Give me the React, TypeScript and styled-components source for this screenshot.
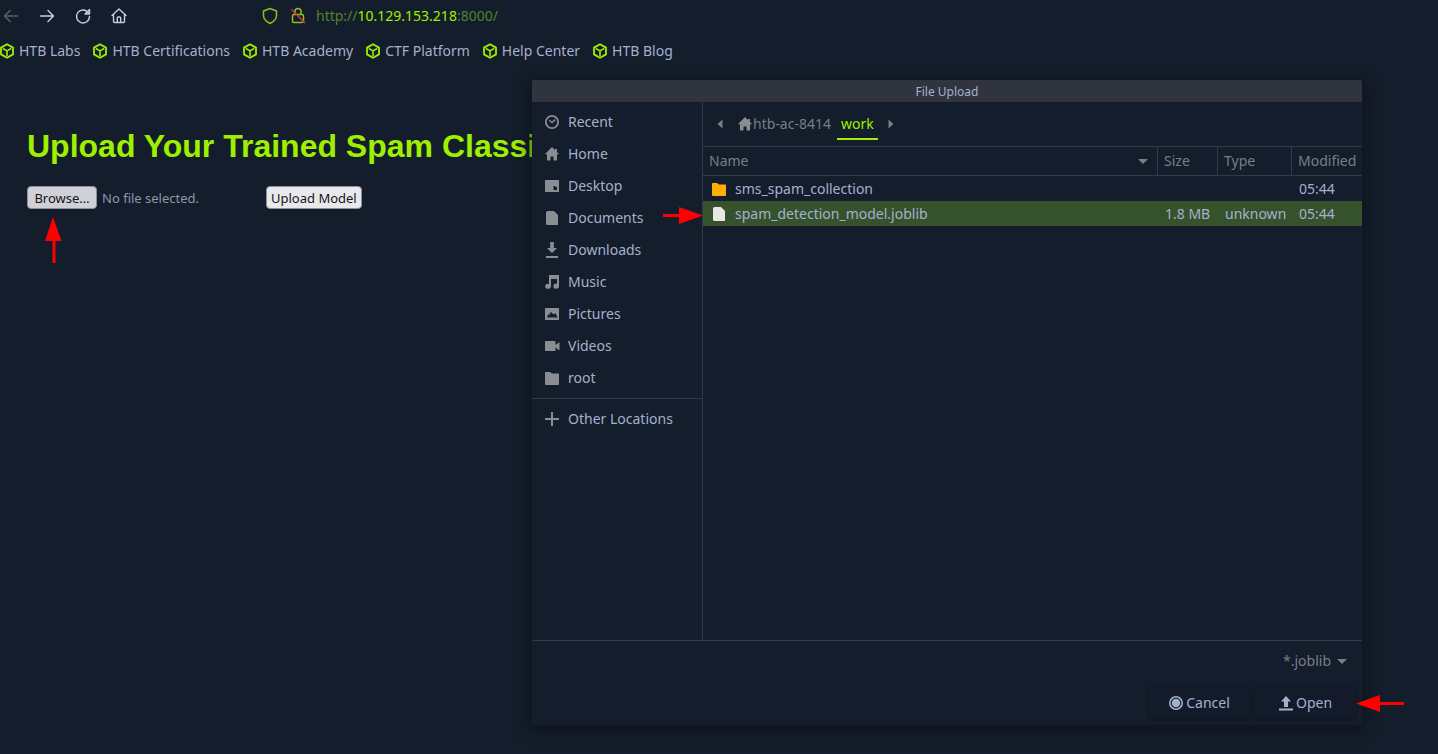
import React, { useRef } from "react";
import styled, { createGlobalStyle } from "styled-components";

const color = {
  bg: "#141d2b",
  text: "#a4b1cd",
  dim: "#787d87",
  icon: "#8a8d92",
  line: "#313a49",
  green: "#9fef00",
  url: "#55822a",
  red: "#ff0000",
};

const Global = createGlobalStyle`
  * { box-sizing: border-box; }
  body {
    margin: 0;
    background: ${color.bg};
    color: ${color.text};
    font: 14px/20px "Noto Sans", "Open Sans", sans-serif;
  }
  button, select { font: inherit; color: inherit; }
  svg { display: block; flex: none; }
`;

const Screen = styled.div`
  position: relative;
  min-height: 100vh;
  overflow: hidden;
`;

const Toolbar = styled.nav`
  display: flex;
  align-items: center;
  height: 32px;
`;

const NavButtons = styled.div`
  display: flex;
  gap: 16px;
  padding-left: 1px;
  width: 260px;
`;

const NavButton = styled.button<{ $dim?: boolean }>`
  padding: 0;
  border: 0;
  background: none;
  color: ${(p) => (p.$dim ? "#59606f" : "#c5cde0")};
`;

const Address = styled.div`
  display: flex;
  align-items: center;
  gap: 8px;
  color: ${color.url};
  white-space: nowrap;
`;

const AddressLink = styled.a`
  color: inherit;
  text-decoration: none;
`;

const Host = styled.span`
  color: ${color.green};
`;

const Bookmarks = styled.nav`
  display: flex;
  align-items: center;
  gap: 13px;
  height: 38px;
  white-space: nowrap;
`;

const Bookmark = styled.a`
  display: flex;
  align-items: center;
  gap: 5px;
  color: ${color.text};
  text-decoration: none;
`;

const Page = styled.main`
  padding: 57px 27px;
`;

const Heading = styled.h1`
  margin: 0 0 21px;
  color: ${color.green};
  font: bold 32px/38px "Liberation Sans", Arial, sans-serif;
  white-space: nowrap;
`;

const Form = styled.form`
  display: flex;
  font-size: 13px;
  line-height: 18px;
`;

const FilePicker = styled.div`
  position: relative;
  display: flex;
  align-items: center;
  gap: 5px;
  width: 239px;
  color: #8b96ad;
`;

const FormButton = styled.button<{ $pressed?: boolean }>`
  height: 23px;
  min-width: 70px;
  padding: 0 4px;
  border: 1px solid #8f8f9d;
  border-radius: 4px;
  background: ${(p) => (p.$pressed ? "#d0d0d7" : "#e9e9ed")};
  color: #15141a;
  white-space: nowrap;
`;

const Dialog = styled.section`
  position: absolute;
  top: 80px;
  right: 76px;
  bottom: 29px;
  width: 830px;
  min-height: 480px;
  display: flex;
  flex-direction: column;
  background: ${color.bg};
  border-radius: 2px;
  box-shadow: 0 3px 16px 2px rgba(10, 12, 20, 0.6);
`;

const TitleBar = styled.header`
  height: 22px;
  background: #30343f;
  border-radius: 2px 2px 0 0;
  font-size: 12px;
  line-height: 24px;
  text-align: center;
`;

const DialogBody = styled.div`
  flex: 1;
  display: flex;
`;

const Sidebar = styled.nav`
  width: 171px;
  padding-top: 4px;
  border-right: 1px solid ${color.line};
`;

const Place = styled.button`
  display: flex;
  align-items: center;
  gap: 8px;
  width: 100%;
  height: 32px;
  padding: 0 12px;
  border: 0;
  background: none;
  white-space: nowrap;
  svg { color: ${color.icon}; }
`;

const Divider = styled.hr`
  margin: 4px 0;
  border: 0;
  border-top: 1px solid ${color.line};
`;

const Files = styled.div`
  flex: 1;
  position: relative;
`;

const PathBar = styled.div`
  display: flex;
  align-items: center;
  gap: 2px;
  height: 44px;
  padding: 0 6px;
  color: ${color.dim};
`;

const PathStep = styled.button`
  margin: 0 6px;
  padding: 0;
  border: 0;
  background: none;
`;

const PathButton = styled.button<{ $active?: boolean }>`
  display: flex;
  align-items: center;
  height: 32px;
  padding: 0 4px;
  border: 0;
  border-bottom: 2px solid ${(p) => (p.$active ? color.green : "transparent")};
  border-top: 2px solid transparent;
  background: none;
  color: ${(p) => (p.$active ? color.green : color.dim)};
  svg { color: ${color.icon}; }
`;

const FileTable = styled.table`
  width: 100%;
  border-collapse: separate;
  border-spacing: 0;
  table-layout: fixed;
`;

const HeadCell = styled.th<{ $width?: number }>`
  width: ${(p) => (p.$width ? `${p.$width}px` : "auto")};
  height: 30px;
  padding: 0 0 0 6px;
  border: solid ${color.line};
  border-width: 1px 0 1px ${(p) => (p.$width ? "1px" : "0")};
  color: ${color.dim};
  font-weight: normal;
  text-align: left;
`;

const HeadLabel = styled.div`
  display: flex;
  justify-content: space-between;
  align-items: center;
  padding-right: 9px;
`;

const FileRow = styled.tr<{ $selected?: boolean }>`
  background: ${(p) => (p.$selected ? "#36522d" : "transparent")};
`;

const Cell = styled.td`
  height: 25px;
  padding: 0 0 0 8px;
  white-space: nowrap;
`;

const FileName = styled.div`
  display: flex;
  align-items: center;
  gap: 8px;
`;

const DialogFooter = styled.footer`
  display: flex;
  flex-direction: column;
  align-items: flex-end;
  gap: 10px;
  height: 85px;
  padding: 4px 6px;
  border-top: 1px solid ${color.line};
`;

const Filter = styled.label`
  position: relative;
  display: flex;
  align-items: center;
  height: 32px;
  color: ${color.dim};
  svg {
    position: absolute;
    right: 9px;
    pointer-events: none;
  }
`;

const FilterSelect = styled.select`
  appearance: none;
  border: 0;
  padding: 0 25px 0 0;
  background: none;
`;

const Actions = styled.div`
  display: flex;
  gap: 4px;
`;

const Action = styled.button`
  display: flex;
  align-items: center;
  justify-content: center;
  gap: 2px;
  width: 102px;
  height: 32px;
  border: 0;
  border-radius: 3px;
  background: #131b2b;
  box-shadow: 0 1px 3px rgba(8, 10, 20, 0.4);
`;

const OpenSlot = styled.div`
  position: relative;
`;

const Pointer = styled.svg<{ $place: "browse" | "file" | "open" }>`
  position: absolute;
  ${(p) => p.$place === "browse" && "left: 18px; top: 31px;"}
  ${(p) => p.$place === "file" && "left: -40px; top: 105px;"}
  ${(p) => p.$place === "open" && "left: 102px; top: 8px;"}
`;

const shapes = {
  recent: (
    <g fill="none" stroke="currentColor" strokeWidth="1.8">
      <circle cx="8" cy="8" r="6.1" />
      <path d="M5.3 6.2 8 8.6l3.2-3" strokeWidth="1.5" />
    </g>
  ),
  home: <path d="M8 1 .8 8.300H3V14.500h3.500V10.500h3v4H13V8.300h2.200L13 6V3h-2v1z" />,
  desktop: <path fillRule="evenodd" d="M1 2h14v12H1zM9.500 8v4H13V9h-1.500V8z" />,
  document: <path d="M3.500 1H10l4 4v9.500a.5.5 0 0 1-.5.5h-10a1.500 1.500 0 0 1-1.500-1.500v-11A1.500 1.500 0 0 1 3.500 1z" />,
  download: <path d="M6.200 0h3.600v6H13L8 11 3 6h3.200zM2 14h12v2H2z" />,
  music: <path d="M5 1h10v11.200A2.800 2.500 0 1 1 13 9.800V5H7v7.500A2.900 2.500 0 1 1 5 10z" />,
  picture: <path fillRule="evenodd" d="M1 2h14v12H1zM3 11.500h10.500L11.500 7 10 8.500 6.700 6 5.200 9 4.300 8.300z" />,
  video: <path d="M1.500 3h9.500q.5 0 .5.5V7L15.500 4v8.500l-4-3v3q0 .5-.5.5H1.500q-.5 0-.5-.5v-9q0-.5.5-.5z" />,
  folder: <path d="M1.500 2H6l2 1.500h6.500q.5 0 .5.5v10q0 1-1 1H2q-1 0-1-1V2.500q0-.5.5-.5z" />,
  plus: <path d="M7 1h2v6h6v2H9v6H7V9H1V7h6z" />,
  cancel: (
    <g>
      <circle cx="8" cy="8" r="6.200" fill="none" stroke="currentColor" strokeWidth="1.600" />
      <circle cx="8" cy="8" r="4.200" />
    </g>
  ),
  open: <path d="M8 1l5 5.500H10V12H6V6.500H3zM1 13.500h14v2H1z" />,
};

type ShapeName = keyof typeof shapes;

const Icon = ({ name, fill = "currentColor" }: { name: ShapeName; fill?: string }) => (
  <svg width="16" height="16" viewBox="0 0 16 16" fill={fill} aria-hidden="true">
    {shapes[name]}
  </svg>
);

const LineIcon = ({ d }: { d: string }) => (
  <svg width="20" height="20" viewBox="0 0 20 20" fill="none" stroke="currentColor" strokeWidth="1.4" strokeLinecap="round" strokeLinejoin="round" aria-hidden="true">
    <path d={d} />
  </svg>
);

const Triangle = ({ dir }: { dir: "left" | "right" | "down" }) => (
  <svg width="10" height="10" viewBox="0 0 10 10" fill="currentColor" aria-hidden="true">
    <path d={{ left: "M7.500.5v9L2.500 5z", right: "M2.500.5v9L7.500 5z", down: "M0 3h10L5 8z" }[dir]} />
  </svg>
);

const Cube = () => (
  <svg width="14" height="16" viewBox="0 0 14 16" fill="none" stroke={color.green} strokeWidth="1.800" strokeLinejoin="round" aria-hidden="true">
    <path d="M7 1.200 13 4.600v6.800L7 14.800 1 11.400V4.600z" />
    <path d="M2.800 5.500 7 7.900l4.200-2.400M7 7.900v5" strokeWidth="1.600" />
  </svg>
);

const places: [ShapeName, string][] = [
  ["recent", "Recent"],
  ["home", "Home"],
  ["desktop", "Desktop"],
  ["document", "Documents"],
  ["download", "Downloads"],
  ["music", "Music"],
  ["picture", "Pictures"],
  ["video", "Videos"],
  ["folder", "root"],
];

const bookmarks = ["HTB Labs", "HTB Certifications", "HTB Academy", "CTF Platform", "Help Center", "HTB Blog"];

export default function App() {
  const fileInput = useRef<HTMLInputElement>(null);

  return (
    <Screen>
      <Global />
      <Toolbar aria-label="Browser">
        <NavButtons>
          <NavButton $dim aria-label="Back"><LineIcon d="M16.500 10H3.500M9 4.500 3.500 10 9 15.500" /></NavButton>
          <NavButton aria-label="Forward"><LineIcon d="M3.500 10h13M11 4.500l5.500 5.500-5.500 5.500" /></NavButton>
          <NavButton aria-label="Reload"><LineIcon d="M15.500 7A6.500 6.500 0 1 0 16.500 10.500M16.500 3.500V8H12z" /></NavButton>
          <NavButton aria-label="Home page"><LineIcon d="M3 9.500 10 3l7 6.500M4.500 8.500v7q0 1 1 1h9q1 0 1-1v-7M8.300 16.500v-4.500q0-1 1-1h1.400q1 0 1 1v4.500" /></NavButton>
        </NavButtons>
        <Address>
          <svg width="20" height="20" viewBox="0 0 20 20" fill="none" stroke="#83c51b" strokeWidth="1.500" strokeLinejoin="round" aria-hidden="true">
            <path d="M10 2.500 16.500 5v4.500c0 3.500-2.500 6-6.500 8-4-2-6.500-4.500-6.500-8V5z" />
          </svg>
          <svg width="20" height="20" viewBox="0 0 20 20" fill="none" stroke="#83c51b" strokeWidth="1.500" strokeLinejoin="round" aria-hidden="true">
            <rect x="4.500" y="8.500" width="11" height="8" rx="1.500" />
            <path d="M7 8.500V5.500a3 3 0 0 1 6 0v3" />
            <path d="M3.500 3.500 17 17" stroke="#e22850" />
          </svg>
          <AddressLink href="http://10.129.153.218:8000/">http://<Host>10.129.153.218</Host>:8000/</AddressLink>
        </Address>
      </Toolbar>
      <Bookmarks aria-label="Bookmarks">
        {bookmarks.map((name) => (
          <Bookmark key={name} href="#"><Cube />{name}</Bookmark>
        ))}
      </Bookmarks>

      <Page>
        <Heading>Upload Your Trained Spam Classi</Heading>
        <Form onSubmit={(e) => e.preventDefault()}>
          <FilePicker>
            <input ref={fileInput} type="file" accept=".joblib" aria-label="Model file" hidden />
            <FormButton type="button" $pressed onClick={() => fileInput.current?.click()}>Browse…</FormButton>
            <span>No file selected.</span>
            <Pointer $place="browse" width="17" height="46" viewBox="0 0 17 46" fill={color.red} aria-hidden="true">
              <path d="M8 0l8.500 24H10.500v22H7.500V24H0z" />
            </Pointer>
          </FilePicker>
          <FormButton type="submit">Upload Model</FormButton>
        </Form>
      </Page>

      <Dialog role="dialog" aria-label="File Upload">
        <TitleBar>File Upload</TitleBar>
        <DialogBody>
          <Sidebar aria-label="Places">
            {places.map(([icon, name]) => (
              <Place key={name}><Icon name={icon} />{name}</Place>
            ))}
            <Divider />
            <Place><Icon name="plus" />Other Locations</Place>
          </Sidebar>
          <Files>
            <PathBar>
              <PathStep aria-label="Scroll left"><Triangle dir="left" /></PathStep>
              <PathButton><Icon name="home" />htb-ac-8414</PathButton>
              <PathButton $active>work</PathButton>
              <PathStep aria-label="Scroll right" disabled><Triangle dir="right" /></PathStep>
            </PathBar>
            <FileTable>
              <thead>
                <tr>
                  <HeadCell><HeadLabel>Name<Triangle dir="down" /></HeadLabel></HeadCell>
                  <HeadCell $width={60}>Size</HeadCell>
                  <HeadCell $width={74}>Type</HeadCell>
                  <HeadCell $width={71}>Modified</HeadCell>
                </tr>
              </thead>
              <tbody>
                <FileRow>
                  <Cell><FileName><Icon name="folder" fill="#ffaf00" />sms_spam_collection</FileName></Cell>
                  <Cell />
                  <Cell />
                  <Cell>05:44</Cell>
                </FileRow>
                <FileRow $selected>
                  <Cell><FileName><Icon name="document" fill="#e8e8e8" />spam_detection_model.joblib</FileName></Cell>
                  <Cell>1.8 MB</Cell>
                  <Cell>unknown</Cell>
                  <Cell>05:44</Cell>
                </FileRow>
              </tbody>
            </FileTable>
            <Pointer $place="file" width="40" height="17" viewBox="0 0 40 17" fill={color.red} aria-hidden="true">
              <path d="M0 7h16V0l24 8.500L16 17v-7H0z" />
            </Pointer>
          </Files>
        </DialogBody>
        <DialogFooter>
          <Filter>
            <FilterSelect aria-label="File type">
              <option>*.joblib</option>
            </FilterSelect>
            <Triangle dir="down" />
          </Filter>
          <Actions>
            <Action><Icon name="cancel" />Cancel</Action>
            <OpenSlot>
              <Action><Icon name="open" />Open</Action>
              <Pointer $place="open" width="48" height="17" viewBox="0 0 48 17" fill={color.red} aria-hidden="true">
                <path d="M0 8.500 24 0v7h24v3H24v7z" />
              </Pointer>
            </OpenSlot>
          </Actions>
        </DialogFooter>
      </Dialog>
    </Screen>
  );
}
